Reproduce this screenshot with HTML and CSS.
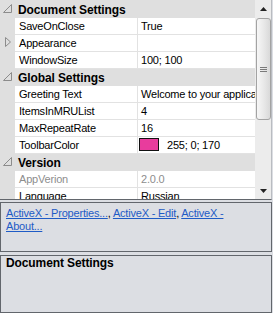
FILE: index.html
```html
<!DOCTYPE html>
<html lang="en">
<head>
    <meta charset="UTF-8">
    <meta name="viewport" content="width=device-width, initial-scale=1.0">
    <title>Property Grid</title>
    <link rel="stylesheet" href="styles.css">
</head>
<body>
    <div class="grid">
        <div class="rows">
            <div class="cat">
                <span class="glyph"><svg width="10" height="10" viewBox="0 0 10 10"><polygon points="8.5,0.5 8.5,8.5 0.5,8.5" fill="none" stroke="#8c8c8c"/></svg></span>
                <span class="cat-title">Document Settings</span>
            </div>
            <div class="prop"><div class="margin"></div><div class="name">SaveOnClose</div><div class="value">True</div></div>
            <div class="prop">
                <div class="margin"><svg class="expand" width="7" height="11" viewBox="0 0 7 11"><polygon points="0.5,0.5 5.5,5 0.5,9.5" fill="none" stroke="#8c8c8c"/></svg></div>
                <div class="name">Appearance</div><div class="value"></div>
            </div>
            <div class="prop"><div class="margin"></div><div class="name">WindowSize</div><div class="value">100; 100</div></div>
            <div class="cat">
                <span class="glyph"><svg width="10" height="10" viewBox="0 0 10 10"><polygon points="8.5,0.5 8.5,8.5 0.5,8.5" fill="none" stroke="#8c8c8c"/></svg></span>
                <span class="cat-title">Global Settings</span>
            </div>
            <div class="prop"><div class="margin"></div><div class="name">Greeting Text</div><div class="value">Welcome to your application!</div></div>
            <div class="prop"><div class="margin"></div><div class="name">ItemsInMRUList</div><div class="value">4</div></div>
            <div class="prop"><div class="margin"></div><div class="name">MaxRepeatRate</div><div class="value">16</div></div>
            <div class="prop">
                <div class="margin"></div><div class="name">ToolbarColor</div>
                <div class="value color"><span class="swatch"></span>255; 0; 170</div>
            </div>
            <div class="cat">
                <span class="glyph"><svg width="10" height="10" viewBox="0 0 10 10"><polygon points="8.5,0.5 8.5,8.5 0.5,8.5" fill="none" stroke="#8c8c8c"/></svg></span>
                <span class="cat-title">Version</span>
            </div>
            <div class="prop readonly"><div class="margin"></div><div class="name">AppVerion</div><div class="value">2.0.0</div></div>
            <div class="prop"><div class="margin"></div><div class="name">Language</div><div class="value">Russian</div></div>
        </div>
        <div class="scrollbar">
            <div class="sb-btn"><svg width="7" height="4" viewBox="0 0 7 4"><polygon points="3.5,0 7,4 0,4" fill="#222"/></svg></div>
            <div class="thumb">
                <svg width="7" height="5" viewBox="0 0 7 5"><path d="M0 0.5H7M0 2.5H7M0 4.5H7" stroke="#7a7a7a"/></svg>
            </div>
            <div class="sb-space"></div>
            <div class="sb-btn"><svg width="7" height="4" viewBox="0 0 7 4"><polygon points="0,0 7,0 3.5,4" fill="#222"/></svg></div>
        </div>
    </div>

    <div class="commands">
        <a href="#">ActiveX - Properties...</a>, <a href="#">ActiveX - Edit</a>, <a href="#">ActiveX - About...</a>
    </div>

    <div class="help">
        <div class="help-title">Document Settings</div>
    </div>
</body>
</html>
```

FILE: styles.css
```css
body {
    margin: 0;
    width: 273px;
    height: 313px;
    overflow: hidden;
    background-color: #dcdee3;
    font-family: "Liberation Sans", Arial, sans-serif;
    font-size: 11px;
    letter-spacing: -0.2px;
    color: #000;
}

.grid {
    display: flex;
    width: 272px;
    height: 200px;
    box-sizing: border-box;
    border-bottom: 1px solid #62666c;
    border-right: 1px solid #b9bcc1;
    background-color: #fff;
    overflow: hidden;
}

.rows {
    width: 255px;
    padding-top: 1px;
    background-color: #dfdfdf;
}

.cat {
    display: flex;
    align-items: center;
    height: 17px;
    background-color: #dfdfdf;
}

.glyph {
    display: flex;
    width: 18px;
    padding-left: 3px;
    box-sizing: border-box;
    margin-top: -1px;
}

.cat-title {
    font-size: 12px;
    font-weight: bold;
    letter-spacing: -0.1px;
    line-height: 16px;
}

.prop {
    display: flex;
    height: 17px;
    line-height: 16px;
}

.margin {
    width: 15px;
    flex-shrink: 0;
    background-color: #dfdfdf;
}

.expand {
    display: block;
    margin: 2px 0 0 5px;
}

.name {
    width: 123px;
    flex-shrink: 0;
    box-sizing: border-box;
    padding-left: 4px;
    background-color: #fff;
    border-right: 1px solid #e2e2e2;
    border-bottom: 1px solid #e2e2e2;
}

.value {
    flex: 1;
    display: flex;
    align-items: flex-start;
    padding-left: 3px;
    background-color: #fff;
    border-bottom: 1px solid #e2e2e2;
    white-space: nowrap;
    overflow: hidden;
}

.value.color {
    padding-left: 1px;
}

.swatch {
    width: 18px;
    height: 11px;
    margin: 1px 8px 0 0;
    background-color: #e83c9d;
    border: 1px solid #111;
}

.readonly .name,
.readonly .value {
    color: #8d8d8d;
}

.scrollbar {
    width: 16px;
    display: flex;
    flex-direction: column;
    background-color: #ececec;
}

.sb-btn {
    height: 17px;
    display: flex;
    justify-content: center;
    align-items: center;
}

.thumb {
    height: 102px;
    margin: 1px 0 0 1px;
    box-sizing: border-box;
    border: 1px solid #a3a3a3;
    border-radius: 3px;
    background: linear-gradient(to right, #f7f7f7, #e6e6e6 60%, #d9d9d9);
    display: flex;
    justify-content: center;
    align-items: center;
}

.sb-space {
    flex: 1;
}

.commands {
    width: 272px;
    height: 50px;
    margin-top: 2px;
    box-sizing: border-box;
    border: 1px solid #62666c;
    padding: 4px 20px 0 5px;
    line-height: 13px;
}

.commands a {
    color: #1e5bc6;
}

.help {
    width: 272px;
    height: 58px;
    margin-top: 3px;
    box-sizing: border-box;
    border: 1px solid #62666c;
    padding: 0 5px;
}

.help-title {
    font-size: 12px;
    font-weight: bold;
    letter-spacing: -0.1px;
    line-height: 15px;
}
```
